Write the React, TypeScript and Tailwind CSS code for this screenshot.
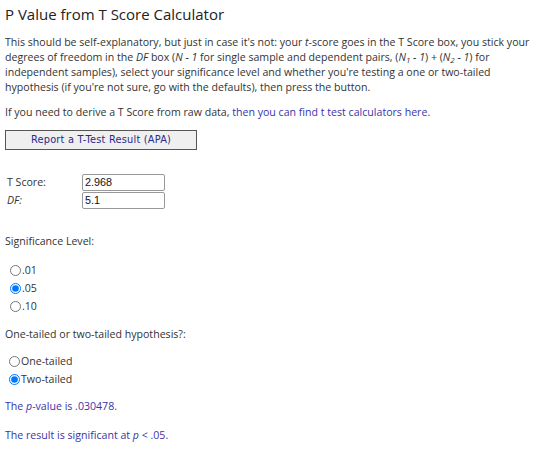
export default function App() {
  return (
    <div className="w-[540px] h-[451px] bg-white text-[#333] px-[5px] pt-[3px] font-['Open_Sans',sans-serif] text-[10.6px] leading-[15px] overflow-hidden">
      <h1 className="text-[15px] leading-[22px] text-[#222]">P Value from T Score Calculator</h1>
      <p className="mt-[10px]">
        This should be self-explanatory, but just in case it's not: your <i>t</i>-score goes in the T Score box, you stick your degrees of freedom in the <i>DF</i> box (<i>N - 1</i> for single sample and dependent pairs, (<i>N<sub className="text-[8px]">1</sub> - 1</i>) + (<i>N<sub className="text-[8px]">2</sub> - 1</i>) for independent samples), select your significance level and whether you're testing a one or two-tailed hypothesis (if you're not sure, go with the defaults), then press the button.
      </p>
      <p className="mt-[10px]">
        If you need to derive a T Score from raw data, <span className="text-[#3a34a8]">then you can find t test calculators here.</span>
      </p>
      <button className="mt-[10px] block w-[192px] h-[20px] bg-[#efefef] border border-[#555] text-[#2a2a8a] font-['DejaVu_Sans',sans-serif] text-[9.8px] leading-[18px] tracking-[0.2px]">
        Report a T-Test Result (APA)
      </button>
      <div className="mt-[24px] ml-[2px] flex flex-col gap-[1px]">
        <div className="flex items-center">
          <span className="w-[75px]">T Score:</span>
          <div className="w-[83px] h-[17px] border border-[#999] rounded-[2px] px-[2px] font-['Liberation_Sans',sans-serif] text-[10.8px] leading-[15px] text-[#111]">2.968</div>
        </div>
        <div className="flex items-center">
          <span className="w-[75px] italic">DF:</span>
          <div className="w-[83px] h-[17px] border border-[#999] rounded-[2px] px-[2px] font-['Liberation_Sans',sans-serif] text-[10.8px] leading-[15px] text-[#111]">5.1</div>
        </div>
      </div>
      <p className="mt-[25px]">Significance Level:</p>
      <div className="mt-[12px] ml-[5px] flex flex-col">
        <Radio label=".01" />
        <Radio label=".05" checked />
        <Radio label=".10" />
      </div>
      <p className="mt-[12px]">One-tailed or two-tailed hypothesis?:</p>
      <div className="mt-[10px] ml-[4px] flex flex-col">
        <Radio label="One-tailed" />
        <Radio label="Two-tailed" checked />
      </div>
      <p className="mt-[11px] text-[#3a34a8]">The <i>p</i>-value is .030478.</p>
      <p className="mt-[14px] text-[#3a34a8]">The result is significant at <i>p</i> &lt; .05.</p>
    </div>
  );
}

function Radio({ label, checked }: { label: string; checked?: boolean }) {
  return (
    <label className="flex items-center h-[18px]">
      <input type="radio" readOnly checked={!!checked} className="w-[11px] h-[11px] m-0" />
      <span className="ml-[1px]">{label}</span>
    </label>
  );
}
